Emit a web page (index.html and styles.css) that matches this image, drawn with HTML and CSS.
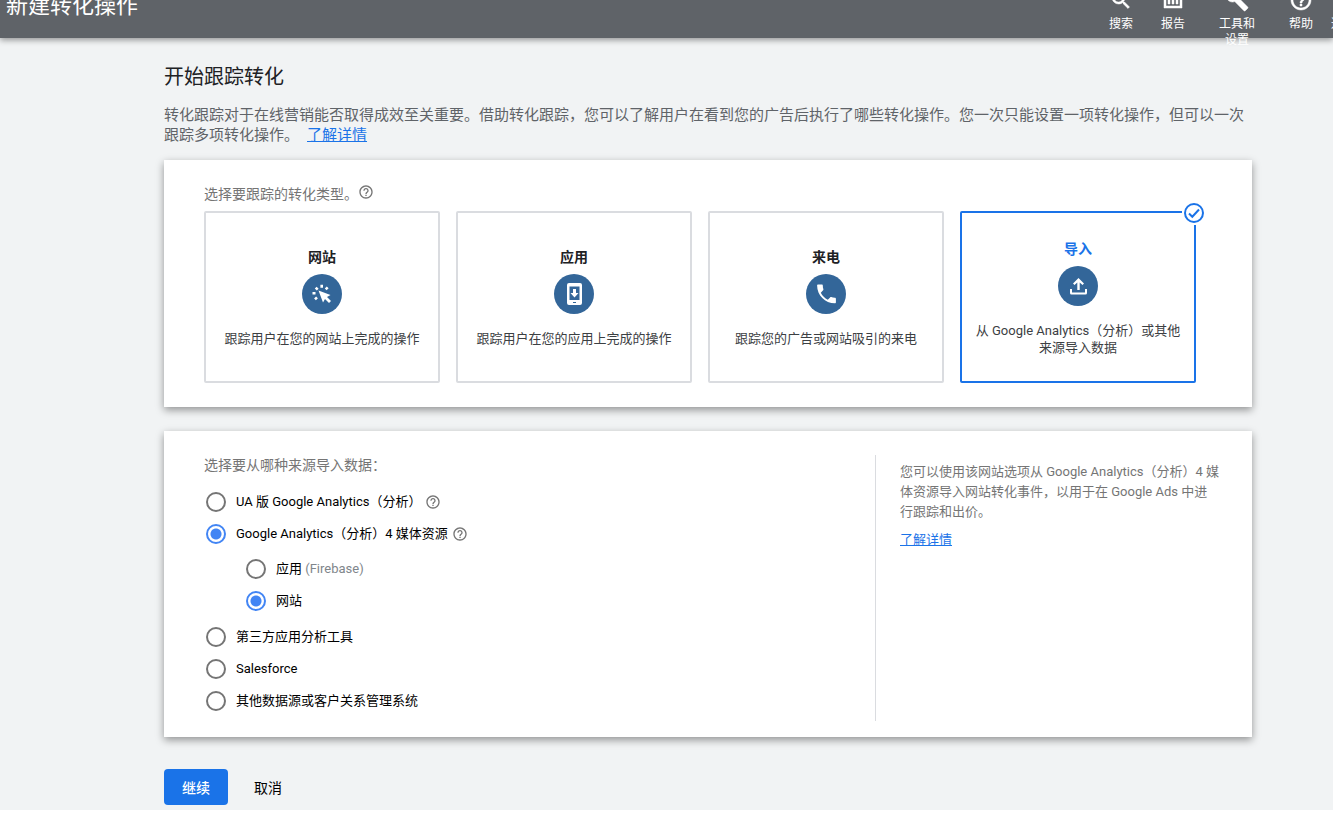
FILE: index.html
```html
<!DOCTYPE html>
<html lang="zh-CN">
<head>
  <meta charset="UTF-8" />
  <meta name="viewport" content="width=device-width, initial-scale=1" />
  <title>新建转化操作</title>
  <link rel="stylesheet" href="styles.css">
</head>
<body>

<svg class="sprite" aria-hidden="true">
  <symbol id="icon-help" viewBox="0 0 24 24">
    <path d="M11 18h2v-2h-2v2zm1-16C6.48 2 2 6.48 2 12s4.480 10 10 10 10-4.480 10-10S17.520 2 12 2zm0 18c-4.410 0-8-3.590-8-8s3.590-8 8-8 8 3.590 8 8-3.590 8-8 8zm0-14c-2.210 0-4 1.790-4 4h2c0-1.100.900-2 2-2s2 .900 2 2c0 2-3 1.750-3 5h2c0-2.250 3-2.500 3-5 0-2.210-1.790-4-4-4z"/>
  </symbol>
</svg>

<div class="page">
  <header class="topbar">
    <h1>新建转化操作</h1>
    <nav class="tools">
      <a href="#">
        <svg viewBox="0 0 24 24"><path d="M15.500 14h-.790l-.280-.270A6.470 6.470 0 0 0 16 9.500 6.500 6.500 0 1 0 9.500 16c1.610 0 3.090-.590 4.230-1.570l.270.280v.790l5 4.990L20.490 19l-4.990-5zm-6 0a4.500 4.500 0 1 1 0-9 4.500 4.500 0 0 1 0 9z"/></svg>
        <span>搜索</span>
      </a>
      <a href="#">
        <svg viewBox="0 0 24 24"><path d="M3 1h18v19H3zM5 3v15h14V3zM7 8h2v8H7zM11 5h2v11h-2zM15 8h2v8h-2z" fill-rule="evenodd"/></svg>
        <span>报告</span>
      </a>
      <a href="#" class="wide">
        <svg viewBox="0 0 24 24"><path d="M22.700 19l-9.100-9.100c.900-2.300.400-5-1.500-6.900-2-2-5-2.400-7.400-1.300L9 6 6 9 1.600 4.700C.400 7.100.900 10.100 2.900 12.100c1.900 1.900 4.600 2.400 6.900 1.500l9.100 9.100c.400.400 1 .400 1.400 0l2.300-2.300c.500-.400.500-1.100.100-1.400z"/></svg>
        <span>工具和<br>设置</span>
      </a>
      <a href="#">
        <svg viewBox="0 0 24 24"><use href="#icon-help"/></svg>
        <span>帮助</span>
      </a>
      <a href="#" class="narrow">
        <svg viewBox="0 0 24 24"></svg>
        <span>通知</span>
      </a>
    </nav>
  </header>

  <main>
    <h2>开始跟踪转化</h2>
    <p class="intro">转化跟踪对于在线营销能否取得成效至关重要。借助转化跟踪，您可以了解用户在看到您的广告后执行了哪些转化操作。您一次只能设置一项转化操作，但可以一次跟踪多项转化操作。<a href="#">了解详情</a></p>

    <section class="card types">
      <h3>选择要跟踪的转化类型。<svg class="help"><use href="#icon-help"/></svg></h3>
      <div class="type-list">
        <button type="button" class="type">
          <strong>网站</strong>
          <svg class="badge" viewBox="0 0 40 40">
            <circle class="disc" cx="20" cy="20" r="20"/>
            <path d="M16.500 16.500l12 4.500-3.500 2 4 4-2 2-4-4-2 3.500z"/>
            <path d="M19.700 10.800v3M13.700 13.700l2 2M25.700 13.300l-2 2M10.500 19.300h3M13 25.300l2-2" stroke="#fff" stroke-width="2.600"/>
          </svg>
          <span>跟踪用户在您的网站上完成的操作</span>
        </button>
        <button type="button" class="type">
          <strong>应用</strong>
          <svg class="badge" viewBox="0 0 40 40">
            <circle class="disc" cx="20" cy="20" r="20"/>
            <path fill-rule="evenodd" d="M15 9h11a2 2 0 0 1 2 2v18a2 2 0 0 1-2 2H15a2 2 0 0 1-2-2V11a2 2 0 0 1 2-2zM15.500 12.500v13.500h10V12.500zM19 28v1h3v-1z"/>
            <path d="M19 15h3v4h2.500l-4 4.500-4-4.500H19z"/>
          </svg>
          <span>跟踪用户在您的应用上完成的操作</span>
        </button>
        <button type="button" class="type">
          <strong>来电</strong>
          <svg class="badge" viewBox="0 0 40 40">
            <circle class="disc" cx="20" cy="20" r="20"/>
            <path d="M14.800 18.700c1.500 3 4 5.500 7 7l2.300-2.300c.300-.300.700-.400 1.100-.300 1.200.400 2.400.600 3.700.600.600 0 1 .500 1 1.100v3.500c0 .600-.400 1-1 1-9.800 0-17.800-8-17.800-17.800 0-.600.500-1 1-1h3.700c.600 0 1 .400 1 1 0 1.300.200 2.500.600 3.700.100.400 0 .800-.300 1.100z"/>
          </svg>
          <span>跟踪您的广告或网站吸引的来电</span>
        </button>
        <button type="button" class="type selected">
          <strong>导入</strong>
          <svg class="badge" viewBox="0 0 40 40">
            <circle class="disc" cx="20" cy="20" r="20"/>
            <path d="M20.500 12l5.500 5.500-1.500 1.500-2.800-2.500V24h-2.400v-7.500L16.500 19 15 17.500zM12 23h2v3.500h13V23h2v4a1.500 1.500 0 0 1-1.500 1.500h-14A1.500 1.500 0 0 1 12 27z"/>
          </svg>
          <span>从 Google Analytics（分析）或其他来源导入数据</span>
          <svg class="check" viewBox="0 0 24 24">
            <circle cx="12" cy="12" r="9"/>
            <path d="M7 12.500l3.300 3.300L17 8.500"/>
          </svg>
        </button>
      </div>
    </section>

    <section class="card sources">
      <form class="source-form">
        <h3>选择要从哪种来源导入数据：</h3>
        <label class="radio"><input type="radio" name="source"><span>UA 版 Google Analytics（分析）</span><svg class="help"><use href="#icon-help"/></svg></label>
        <label class="radio"><input type="radio" name="source" checked><span>Google Analytics（分析）4 媒体资源</span><svg class="help"><use href="#icon-help"/></svg></label>
        <div class="sub">
          <label class="radio"><input type="radio" name="property"><span>应用 <small>(Firebase)</small></span></label>
          <label class="radio"><input type="radio" name="property" checked><span>网站</span></label>
        </div>
        <label class="radio"><input type="radio" name="source"><span>第三方应用分析工具</span></label>
        <label class="radio"><input type="radio" name="source"><span>Salesforce</span></label>
        <label class="radio"><input type="radio" name="source"><span>其他数据源或客户关系管理系统</span></label>
      </form>
      <aside>
        <p>您可以使用该网站选项从 Google Analytics（分析）4 媒体资源导入网站转化事件，以用于在 Google Ads 中进行跟踪和出价。</p>
        <a href="#">了解详情</a>
      </aside>
    </section>

    <div class="actions">
      <button type="button" class="primary">继续</button>
      <button type="button">取消</button>
    </div>
  </main>
</div>

</body>
</html>
```
FILE: styles.css
```css
* { margin: 0; padding: 0; box-sizing: border-box; }

body {
  background: #fff;
  color: #202124;
  font-family: Roboto, "Noto Sans CJK SC", sans-serif;
  font-size: 13px;
  text-spacing-trim: space-all;
  overflow: hidden;
}

button {
  font: inherit;
  color: inherit;
  background: none;
  border: none;
  cursor: pointer;
}

a { color: #1a73e8; }

.sprite { display: none; }

.page {
  background: #f1f3f4;
  padding-bottom: 5px;
}

/* top bar, partly scrolled out of view */
.topbar {
  position: relative;
  display: flex;
  justify-content: space-between;
  height: 64px;
  margin-top: -26px;
  padding-left: 6px;
  background: #5f6368;
  color: #fff;
  box-shadow: 0 2px 6px rgba(0,0,0,0.4);
}
.topbar h1 {
  font-size: 22px;
  font-weight: 400;
  line-height: 64px;
}
.tools {
  display: flex;
  margin-right: -26px;
  padding-top: 14px;
}
.tools a {
  display: flex;
  flex-direction: column;
  align-items: center;
  gap: 4px;
  width: 52px;
  color: #fff;
  font-size: 12px;
  line-height: 16px;
  text-align: center;
  text-decoration: none;
}
.tools .wide { width: 76px; }
.tools .narrow { width: 32px; }
.tools svg {
  flex: none;
  width: 24px;
  height: 24px;
  fill: #fff;
  stroke: #fff;
  stroke-width: 0.5;
}

main { padding: 27px 81px 0 164px; }

h2 {
  font-size: 20px;
  font-weight: 400;
  line-height: 24px;
  margin-bottom: 16px;
}
.intro {
  color: #5f6368;
  font-size: 15px;
  line-height: 20px;
  margin-bottom: 15px;
}
.intro a { margin-left: 8px; }

.card {
  background: #fff;
  padding: 24px 32px 24px 40px;
  margin-bottom: 24px;
  box-shadow: 0 3px 8px rgba(0,0,0,0.4);
}
.card h3 {
  display: flex;
  color: #757575;
  font-size: 14px;
  font-weight: 400;
  line-height: 20px;
}
.help {
  width: 16px;
  height: 16px;
  fill: #757575;
}

/* conversion types */
.types h3 { margin-bottom: 7px; }
.type-list {
  display: grid;
  grid-template-columns: repeat(4, 236px);
  gap: 16px;
}
.type {
  position: relative;
  display: flex;
  flex-direction: column;
  align-items: center;
  justify-content: center;
  height: 172px;
  padding: 0 12px;
  border: 2px solid #dadce0;
  border-radius: 2px;
  line-height: 17px;
}
.type strong {
  font-size: 14px;
  line-height: 20px;
}
.type span { color: #3c4043; }
.badge {
  width: 40px;
  height: 40px;
  margin: 7px 0 16px;
  fill: #fff;
}
.badge .disc { fill: #336699; }
.selected { border-color: #1a73e8; }
.selected strong { color: #1a73e8; }
.check {
  position: absolute;
  top: -12px;
  right: -12px;
  width: 24px;
  height: 24px;
  background: #fff;
  fill: none;
  stroke: #1a73e8;
  stroke-width: 2;
}

/* import sources */
.sources {
  display: flex;
  padding-bottom: 16px;
}
.source-form {
  flex: 1;
  padding-bottom: 4px;
}
.sources h3 { margin-bottom: 11px; }
.radio {
  display: flex;
  align-items: center;
  height: 32px;
  padding-left: 2px;
  color: #000;
  line-height: 20px;
}
.radio input {
  appearance: none;
  width: 20px;
  height: 20px;
  margin-right: 10px;
  border: 2px solid #757575;
  border-radius: 50%;
}
.radio input:checked {
  border-color: #4285f4;
  background: radial-gradient(circle, #4285f4 5px, transparent 6px);
}
.radio small {
  color: #80868b;
  font-size: 13px;
}
.radio .help { margin-left: 4px; }
.sub {
  margin: 3px 0 4px;
  padding-left: 40px;
}
.sources aside {
  width: 345px;
  padding: 7px 0 0 24px;
  border-left: 1px solid #dadce0;
  color: #757575;
  line-height: 20px;
}
.sources aside p { margin-bottom: 8px; }

.actions {
  display: flex;
  gap: 8px;
  padding-top: 8px;
}
.actions button {
  height: 36px;
  padding: 0 18px;
  border-radius: 4px;
  color: #000;
  font-size: 14px;
}
.actions .primary {
  background: #1a73e8;
  color: #fff;
  font-weight: 500;
}
```
